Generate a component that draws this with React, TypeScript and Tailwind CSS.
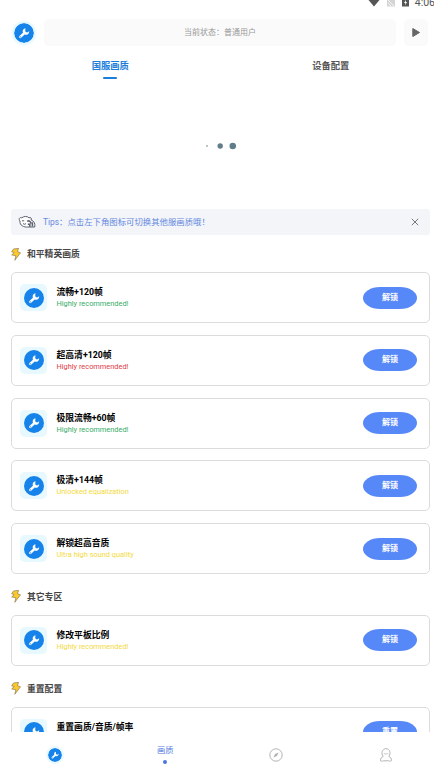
import { clsx } from "clsx";

type Feature = {
  id: string;
  title: string;
  note: string;
  tone: "green" | "red" | "yellow";
  action: string;
};

const peaceItems: Feature[] = [
  { id: "smooth-120", title: "流畅+120帧", note: "Highly recommended!", tone: "green", action: "解锁" },
  { id: "uhd-120", title: "超高清+120帧", note: "Highly recommended!", tone: "red", action: "解锁" },
  { id: "extreme-60", title: "极限流畅+60帧", note: "Highly recommended!", tone: "green", action: "解锁" },
  { id: "clear-144", title: "极清+144帧", note: "Unlocked equalization", tone: "yellow", action: "解锁" },
  { id: "audio", title: "解锁超高音质", note: "Ultra high sound quality", tone: "yellow", action: "解锁" },
];

const otherItems: Feature[] = [
  { id: "tablet", title: "修改平板比例", note: "Highly recommended!", tone: "yellow", action: "解锁" },
];

const resetItems: Feature[] = [
  { id: "reset", title: "重置画质/音质/帧率", note: "Highly recommended!", tone: "green", action: "重置" },
];

const toneClass = {
  green: "text-[#35ac68]",
  red: "text-[#e23a48]",
  yellow: "text-[#f3d93c]",
};

function WrenchBadge({ className }: { className?: string }) {
  return (
    <svg viewBox="0 0 20 20" className={className}>
      <circle cx="10" cy="10" r="10" fill="#1683ea" />
      <path d="M6.3 13.9 9.8 10.6" stroke="#fff" strokeWidth="2.5" strokeLinecap="round" />
      <path
        d="M11.5 5.2a3.2 3.2 0 0 0-2.7 4.2l1.9 2.2a3.3 3.3 0 0 0 4.5-3.3l-2 1.2-1.5-.4-.5-1.5z"
        fill="#fff"
      />
      <circle cx="6.3" cy="13.8" r=".6" fill="#1683ea" />
    </svg>
  );
}

function StatusBar() {
  return (
    <div className="flex h-[7px] shrink-0 items-end justify-end overflow-hidden text-[#555]">
      <svg viewBox="0 0 12 7" className="mr-[7px] h-[7px] w-3">
        <path d="M.5 0h11L6 6.5z" fill="currentColor" />
      </svg>
      <svg viewBox="0 0 8 7" className="mr-[7px] h-[7px] w-2">
        <path d="M0 0h8v6.5H0z" fill="#d4d4d4" />
        <path d="M1 0l6 6M1 3l3 3" stroke="#f5f5f5" />
      </svg>
      <svg viewBox="0 0 7 7" className="mr-[6px] h-[7px] w-[7px]">
        <path d="M0 0h7v6.5H0z" fill="currentColor" />
        <path d="M4 0 2 3h1.4L3 5.5 5 2H3.8z" fill="#fff" />
      </svg>
      <span className="mr-[6px] h-[9px] text-[10.5px] leading-[9px]">4:06</span>
    </div>
  );
}

function Header() {
  return (
    <header className="mt-[12px] flex h-[27px] shrink-0 items-center pl-[14px]">
      <WrenchBadge className="h-[20px] w-[20px] rounded-full shadow-[0_0_2px_2px_#e2f7ff]" />
      <div className="ml-[10px] flex h-[27px] w-[352px] items-center justify-center rounded-[5px] bg-[#fafafa] text-[8px] text-[#999]">
        当前状态：普通用户
      </div>
      <button className="ml-[8px] flex h-[27px] w-[24px] items-center justify-center rounded-[5px] bg-[#fafafa]">
        <svg viewBox="0 0 8 9" className="h-[9px] w-2">
          <path d="M.8.5 7.5 4.5.8 8.5z" fill="#666" stroke="#666" strokeLinejoin="round" />
        </svg>
      </button>
    </header>
  );
}

function Tabs() {
  return (
    <div className="mt-[13px] grid h-[21px] shrink-0 grid-cols-2 text-[9.3px] font-bold leading-[14px]">
      <div className="flex flex-col items-center text-[#1c7edb]">
        国服画质
        <span className="mt-[4px] h-[2px] w-[14px] rounded-full bg-[#1c7edb]" />
      </div>
      <div className="text-center text-[#555]">设备配置</div>
    </div>
  );
}

function LoadingDots() {
  return (
    <div className="flex h-[129px] shrink-0 items-center justify-center pr-px pt-[3px]">
      <svg viewBox="0 0 32 8" className="h-2 w-8" fill="#607d8b">
        <circle cx="3" cy="4" r="0.8" />
        <circle cx="16.2" cy="4" r="2.7" />
        <circle cx="28.8" cy="4" r="3.3" />
      </svg>
    </div>
  );
}

function Tips() {
  return (
    <div className="flex h-[26px] shrink-0 items-center rounded-[3px] bg-[#f3f5f9] pl-[7px] pr-[11px]">
      <svg viewBox="0 0 18 14" className="h-[14px] w-[18px]" fill="none" stroke="#59616c" strokeWidth="1">
        <path
          d="M2 6C.2 4 1.8 1.8 3.8 2.8 6 1 9.2 1 11 2.8c1.8-.8 3 .6 2.1 2.2 3 1 4.3 3.7 3.6 7H9.8C6 12.4 1.4 10.5 2 6z"
          fill="#fff"
        />
        <path d="M4 5.8h2.2M5 8.6q1.4 1.4 3 0" />
        <path d="M9.2 6.4c1.6-1.2 3.6-.2 3.6 2M9.8 9.2h2v2.5M14.4 7.2v4.4" strokeWidth="1.6" />
      </svg>
      <span className="ml-[7px] flex-1 whitespace-nowrap text-[8.4px] text-[#6488de]">
        Tips：点击左下角图标可切换其他服画质哦！
      </span>
      <svg viewBox="0 0 8 8" className="h-2 w-2">
        <path d="M.8.8l6.4 6.4M7.2.8.8 7.2" stroke="#777" />
      </svg>
    </div>
  );
}

function SectionTitle({ children }: { children: string }) {
  return (
    <h2 className="flex h-[14px] items-center text-[8.8px] font-bold leading-[14px] text-[#454545]">
      <svg viewBox="0 0 10 13" className="mr-[6px] h-[13px] w-[10px]">
        <path
          d="M2.6.9 7.6.4 6.4 3.6l3.1 1.2L3.8 12.3 4.9 7.8.7 6.9 3.2 4.6.6 3.8z"
          fill="#fbc92b"
          stroke="#7d6c48"
          strokeWidth=".6"
          strokeLinejoin="round"
        />
      </svg>
      {children}
    </h2>
  );
}

function FeatureCard({ item }: { item: Feature }) {
  return (
    <div className="flex h-[51px] items-center rounded-[5px] border-[1.5px] border-[#dcdcdf] bg-white pl-[8px] pr-[12px]">
      <div className="flex h-[27px] w-[27px] shrink-0 items-center justify-center rounded-[5px] bg-[#e7f8ff]">
        <WrenchBadge className="h-[20px] w-[20px]" />
      </div>
      <div className="ml-[9.5px] flex-1">
        <div className="text-[8.8px] font-bold leading-[12px] text-black">{item.title}</div>
        <div className={clsx("text-[7.4px] leading-[11px]", toneClass[item.tone])}>{item.note}</div>
      </div>
      <button className="flex h-[22px] w-[54px] items-center justify-center rounded-[17px/11px] bg-[#5788f8] text-[8px] font-bold text-white">
        {item.action}
      </button>
    </div>
  );
}

function FeatureList({ items }: { items: Feature[] }) {
  return (
    <div className="mt-[11px] flex flex-col gap-[11.75px]">
      {items.map((item) => (
        <FeatureCard key={item.id} item={item} />
      ))}
    </div>
  );
}

function BottomNav() {
  return (
    <nav className="grid h-[39px] shrink-0 grid-cols-4 bg-white pt-[10px]">
      <div className="flex justify-center pt-[6px]">
        <WrenchBadge className="h-[14px] w-[14px] rounded-full shadow-[0_0_1px_2px_#e7f8ff]" />
      </div>
      <div className="flex flex-col items-center text-[8.3px] leading-[16px] text-[#5379de]">
        画质
        <span className="mt-[2px] h-[4px] w-[4px] rounded-full bg-[#4c76df]" />
      </div>
      <div className="flex justify-center pt-[6px]">
        <svg viewBox="0 0 14 14" className="h-[14px] w-[14px]">
          <circle cx="7" cy="7" r="6.2" fill="none" stroke="#b4b4b4" />
          <path d="M9.6 4.5 8 8 4.4 9.5 6 6z" fill="#b4b4b4" />
        </svg>
      </div>
      <div className="flex justify-center pt-[6px]">
        <svg viewBox="0 0 14 14" className="h-[14px] w-[14px]" fill="none" stroke="#b4b4b4">
          <path
            d="M4.2 8.3C1.7 5.4 3.1.7 7 .7s5.3 4.7 2.8 7.6c1.7.9 2.7 2.2 2.8 4.3-.9.7-1.9.7-2.9.2H4.3c-1 .5-2 .5-2.9-.2.1-2.1 1.1-3.4 2.8-4.3z"
            strokeLinejoin="round"
          />
          <path d="M4.8 5.5q2.2 1.2 4.4 0" strokeWidth=".7" />
        </svg>
      </div>
    </nav>
  );
}

export default function App() {
  return (
    <div className="h-[771px] w-full overflow-hidden bg-white font-['Roboto','Noto_Sans_CJK_SC',sans-serif]">
      <div className="flex h-full w-[441px] flex-col">
        <StatusBar />
        <Header />
        <Tabs />
        <main className="flex min-h-0 flex-1 flex-col overflow-hidden pl-[11px] pr-[11px]">
          <LoadingDots />
          <Tips />
          <section className="mt-[12px]">
            <SectionTitle>和平精英画质</SectionTitle>
            <FeatureList items={peaceItems} />
          </section>
          <section className="mt-[15.5px]">
            <SectionTitle>其它专区</SectionTitle>
            <FeatureList items={otherItems} />
          </section>
          <section className="mt-[16px]">
            <SectionTitle>重置配置</SectionTitle>
            <FeatureList items={resetItems} />
          </section>
        </main>
        <BottomNav />
      </div>
    </div>
  );
}
